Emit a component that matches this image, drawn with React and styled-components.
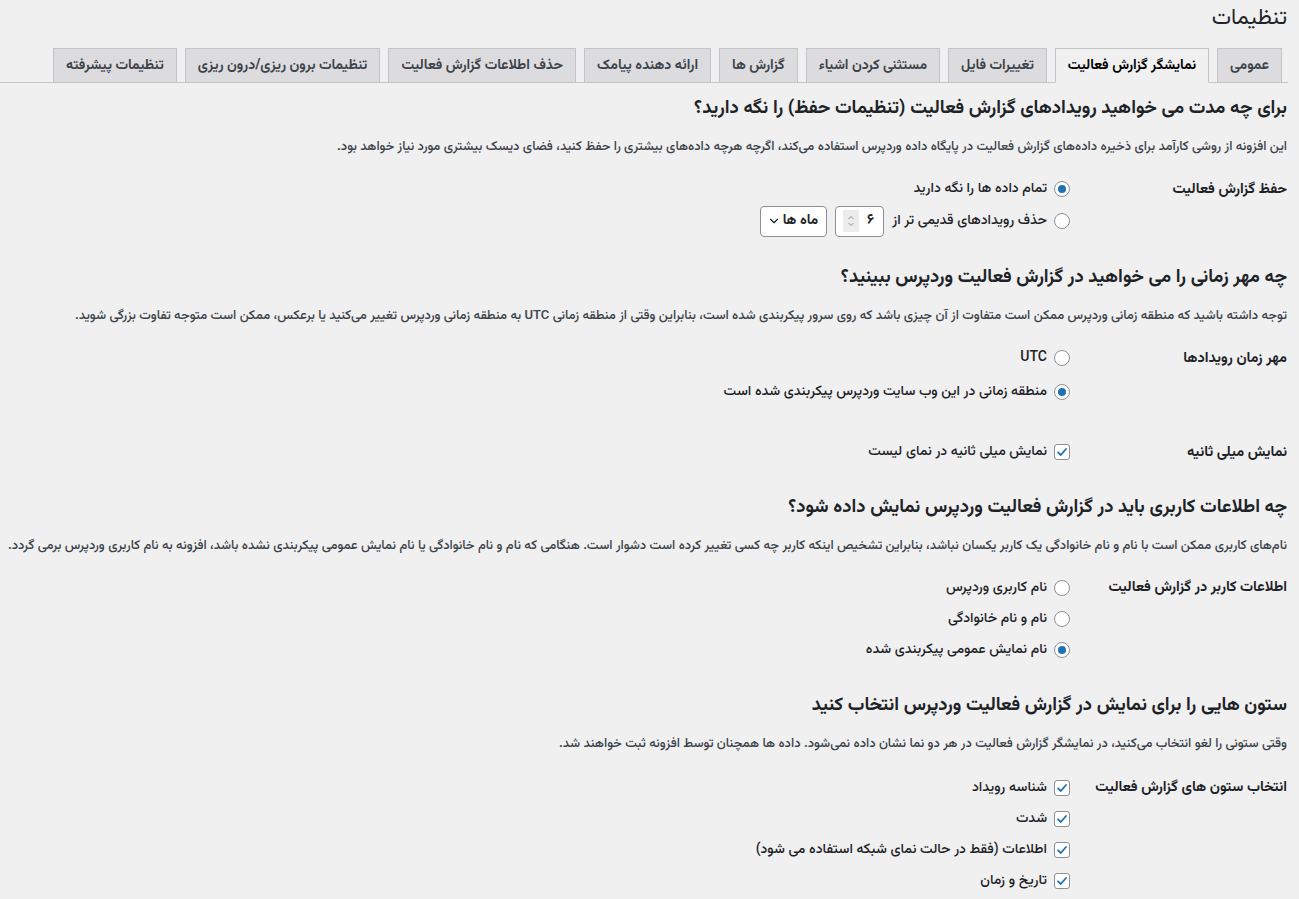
import styled, { createGlobalStyle } from "styled-components";
import { ChevronDown } from "lucide-react";

const GlobalStyle = createGlobalStyle`
  html, body {
    margin: 0;
    padding: 0;
    background: #f0f0f1;
  }
  body {
    font-family: "Vazirmatn", "Noto Sans Arabic", "DejaVu Sans", sans-serif;
    color: #1d2327;
  }
`;

const Wrap = styled.div`
  direction: rtl;
  width: 1299px;
  min-height: 899px;
  box-sizing: border-box;
  padding: 0 12px 0 8px;
`;

const Title = styled.h1`
  margin: 0;
  padding-top: 5px;
  font-size: 22px;
  line-height: 28px;
  font-weight: 400;
  color: #1d2327;
`;

const TabBar = styled.div`
  display: flex;
  gap: 8px;
  margin: 15px -1px 0 -8px;
  padding: 0 6px 0 8px;
  border-bottom: 1px solid #c3c4c7;
`;

const Tab = styled.div`
  height: 35px;
  box-sizing: border-box;
  display: flex;
  align-items: center;
  padding: 0 12px;
  margin-bottom: -1px;
  font-size: 14px;
  font-weight: 700;
  white-space: nowrap;
  border: 1px solid #c3c4c7;
  background: ${(p) => (p.$active ? "#f0f0f1" : "#dcdcde")};
  border-bottom-color: ${(p) => (p.$active ? "#f0f0f1" : "#c3c4c7")};
  color: ${(p) => (p.$active ? "#000" : "#3c434a")};
`;

const Heading = styled.h2`
  margin: ${(p) => p.$mt}px 0 14px;
  font-size: 18.5px;
  line-height: 28px;
  font-weight: 700;
  color: #1d2327;
`;

const Desc = styled.p`
  margin: 0 0 ${(p) => p.$mb || 16}px;
  font-size: 13px;
  line-height: 20px;
  font-weight: 500;
  color: #3c434a;
  white-space: nowrap;
`;

const Row = styled.div`
  display: grid;
  grid-template-columns: 217px 1fr;
  margin-top: ${(p) => p.$gap || 0}px;
`;

const Label = styled.div`
  font-size: 14.5px;
  font-weight: 700;
  color: #1d2327;
  height: ${(p) => p.$h}px;
  display: flex;
  align-items: center;
`;

const Options = styled.div`
  display: flex;
  flex-direction: column;
`;

const Option = styled.label`
  height: ${(p) => p.$h}px;
  display: flex;
  align-items: center;
  gap: 7px;
  font-size: 14px;
  font-weight: 500;
  color: #1d2327;
  white-space: nowrap;
`;

const Radio = styled.span`
  width: 14px;
  height: 14px;
  border: 1px solid #8c8f94;
  border-radius: 50%;
  background: #fff;
  display: flex;
  align-items: center;
  justify-content: center;
  flex-shrink: 0;

  &::after {
    content: "";
    width: 8px;
    height: 8px;
    border-radius: 50%;
    background: ${(p) => (p.$on ? "#2271b1" : "transparent")};
  }
`;

const Check = styled.span`
  width: 14px;
  height: 14px;
  border: 1px solid #8c8f94;
  border-radius: 3px;
  background: #fff;
  display: flex;
  align-items: center;
  justify-content: center;
  flex-shrink: 0;
`;

const NumberBox = styled.div`
  width: 49px;
  height: 31px;
  box-sizing: border-box;
  border: 1px solid #8c8f94;
  border-radius: 4px;
  background: #fff;
  display: flex;
  align-items: center;
  justify-content: space-between;
  padding: 0 9px 0 7px;
  font-size: 14px;
  font-weight: 700;
  margin-right: 1px;
`;

const Spinner = styled.span`
  width: 16px;
  height: 22px;
  background: #ececec;
  display: flex;
  align-items: center;
  justify-content: center;
`;

const Select = styled.div`
  width: 67px;
  height: 31px;
  box-sizing: border-box;
  border: 1px solid #8c8f94;
  border-radius: 4px;
  background: #fff;
  display: flex;
  align-items: center;
  justify-content: space-between;
  padding: 0 8px 0 6px;
  font-size: 14px;
  font-weight: 700;
  margin-right: 1px;
`;

const Tick = () => (
  <svg width="12" height="12" viewBox="0 0 12 12">
    <path d="M2 6.3 L4.8 9 L10 3" fill="none" stroke="#2271b1" strokeWidth="1.8" strokeLinecap="round" strokeLinejoin="round" />
  </svg>
);

const SpinIcon = () => (
  <svg width="8" height="14" viewBox="0 0 8 14">
    <path d="M1.5 5 L4 2.5 L6.5 5 M1.5 9 L4 11.5 L6.5 9" fill="none" stroke="#8c8f94" strokeWidth="1" />
  </svg>
);

const tabs = [
  "عمومی",
  "نمایشگر گزارش فعالیت",
  "تغییرات فایل",
  "مستثنی کردن اشیاء",
  "گزارش ها",
  "ارائه دهنده پیامک",
  "حذف اطلاعات گزارش فعالیت",
  "تنظیمات برون ریزی/درون ریزی",
  "تنظیمات پیشرفته",
];

const columns = [
  "شناسه رویداد",
  "شدت",
  "اطلاعات (فقط در حالت نمای شبکه استفاده می شود)",
  "تاریخ و زمان",
];

export default function App() {
  return (
    <>
      <GlobalStyle />
      <Wrap>
        <Title>تنظیمات</Title>
        <TabBar>
          {tabs.map((t, i) => (
            <Tab key={t} $active={i === 1}>
              {t}
            </Tab>
          ))}
        </TabBar>

        <Heading $mt={12}>برای چه مدت می خواهید رویدادهای گزارش فعالیت (تنظیمات حفظ) را نگه دارید؟</Heading>
        <Desc>
          این افزونه از روشی کارآمد برای ذخیره داده‌های گزارش فعالیت در پایگاه داده وردپرس استفاده می‌کند، اگرچه هرچه داده‌های بیشتری را حفظ کنید، فضای دیسک بیشتری مورد نیاز خواهد بود.
        </Desc>
        <Row>
          <Label $h={32}>حفظ گزارش فعالیت</Label>
          <Options>
            <Option $h={32}>
              <Radio $on />
              تمام داده ها را نگه دارید
            </Option>
            <Option $h={32}>
              <Radio />
              حذف رویدادهای قدیمی تر از
              <NumberBox>
                <span>۶</span>
                <Spinner>
                  <SpinIcon />
                </Spinner>
              </NumberBox>
              <Select>
                <span>ماه ها</span>
                <ChevronDown size={14} strokeWidth={2} color="#1d2327" />
              </Select>
            </Option>
          </Options>
        </Row>

        <Heading $mt={27}>چه مهر زمانی را می خواهید در گزارش فعالیت وردپرس ببینید؟</Heading>
        <Desc $mb={15}>
          توجه داشته باشید که منطقه زمانی وردپرس ممکن است متفاوت از آن چیزی باشد که روی سرور پیکربندی شده است، بنابراین وقتی از منطقه زمانی UTC به منطقه زمانی وردپرس تغییر می‌کنید یا برعکس، ممکن است متوجه تفاوت بزرگی شوید.
        </Desc>
        <Row>
          <Label $h={34}>مهر زمان رویدادها</Label>
          <Options>
            <Option $h={34}>
              <Radio />
              UTC
            </Option>
            <Option $h={34}>
              <Radio $on />
              منطقه زمانی در این وب سایت وردپرس پیکربندی شده است
            </Option>
          </Options>
        </Row>
        <Row $gap={26}>
          <Label $h={34}>نمایش میلی ثانیه</Label>
          <Options>
            <Option $h={34}>
              <Check>
                <Tick />
              </Check>
              نمایش میلی ثانیه در نمای لیست
            </Option>
          </Options>
        </Row>

        <Heading $mt={25}>چه اطلاعات کاربری باید در گزارش فعالیت وردپرس نمایش داده شود؟</Heading>
        <Desc $mb={16}>
          نام‌های کاربری ممکن است با نام و نام خانوادگی یک کاربر یکسان نباشد، بنابراین تشخیص اینکه کاربر چه کسی تغییر کرده است دشوار است. هنگامی که نام و نام خانوادگی یا نام نمایش عمومی پیکربندی نشده باشد، افزونه به نام کاربری وردپرس برمی گردد.
        </Desc>
        <Row>
          <Label $h={31}>اطلاعات کاربر در گزارش فعالیت</Label>
          <Options>
            <Option $h={31}>
              <Radio />
              نام کاربری وردپرس
            </Option>
            <Option $h={31}>
              <Radio />
              نام و نام خانوادگی
            </Option>
            <Option $h={31}>
              <Radio $on />
              نام نمایش عمومی پیکربندی شده
            </Option>
          </Options>
        </Row>

        <Heading $mt={27}>ستون هایی را برای نمایش در گزارش فعالیت وردپرس انتخاب کنید</Heading>
        <Desc $mb={18}>
          وقتی ستونی را لغو انتخاب می‌کنید، در نمایشگر گزارش فعالیت در هر دو نما نشان داده نمی‌شود. داده ها همچنان توسط افزونه ثبت خواهند شد.
        </Desc>
        <Row>
          <Label $h={31}>انتخاب ستون های گزارش فعالیت</Label>
          <Options>
            {columns.map((c) => (
              <Option key={c} $h={31}>
                <Check>
                  <Tick />
                </Check>
                {c}
              </Option>
            ))}
          </Options>
        </Row>
      </Wrap>
    </>
  );
}
